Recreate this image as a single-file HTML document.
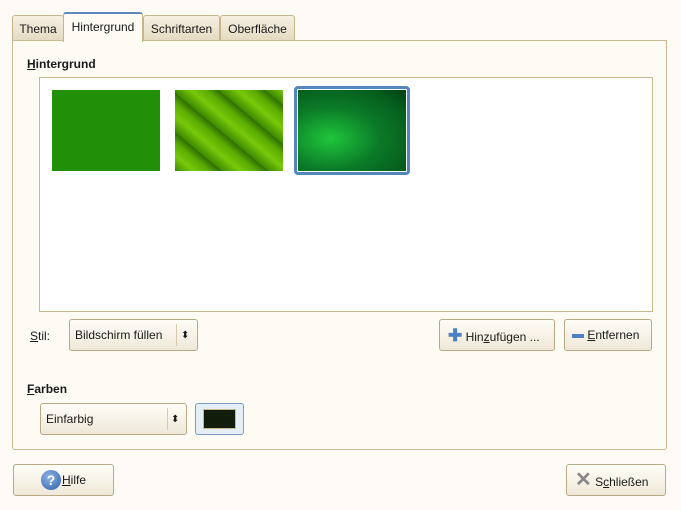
<!DOCTYPE html><html><head><style>
body{margin:0;width:681px;height:510px;background:#fefbf6;font-family:"Liberation Sans",sans-serif;font-size:12px;color:#1a1a1a;position:relative;overflow:hidden}
.a{position:absolute;box-sizing:border-box}
.tab{border:1px solid #c6b589;border-bottom:none;border-radius:3px 3px 0 0;background:linear-gradient(#f6f0e2,#e5dbc2);top:15px;height:25px;line-height:27px;text-align:center}
.btn{border:1px solid #b9a984;border-radius:3px;background:linear-gradient(#fffdf8,#efe8d8);line-height:31px}
u{text-decoration:underline}
</style></head><body>
<div class="a" style="left:12px;top:40px;width:655px;height:410px;border:1px solid #c9b98f;border-radius:0 0 3px 3px;background:#fefbf5"></div>
<div class="a tab" style="left:12px;width:52px">Thema</div>
<div class="a tab" style="left:143px;width:77px">Schriftarten</div>
<div class="a tab" style="left:220px;width:75px">Oberfläche</div>
<div class="a" style="left:63px;top:12px;width:80px;height:30px;border:1px solid #c6b589;border-top:2px solid #5a88bb;border-bottom:none;border-radius:3px 3px 0 0;background:#fefbf5;text-align:center;line-height:26px">Hintergrund</div>
<div class="a" style="left:27px;top:57px;font-weight:bold"><u>H</u>intergrund</div>
<div class="a" style="left:39px;top:77px;width:614px;height:235px;border:1px solid #c9b98f;background:#fff"></div>
<div class="a" style="left:52px;top:90px;width:108px;height:81px;background:#218f08"></div>
<div class="a" style="left:175px;top:90px;width:108px;height:81px;background:repeating-linear-gradient(40deg,#3d8a00 0,#78c80a 12px,#5aac00 22px,#2f6d00 30px)"></div>
<div class="a" style="left:294px;top:86px;width:116px;height:89px;border:3px solid #5286bd;border-radius:4px;background:#fff;padding:1px"><div style="width:108px;height:81px;background:radial-gradient(ellipse at 30% 60%,#1fc63c,#0b7b28 45%,#055c1c 80%,#033e12)"></div></div>
<div class="a" style="left:30px;top:329px"><u>S</u>til:</div>
<div class="a btn" style="left:69px;top:319px;width:129px;height:32px;padding-left:5px">Bildschirm füllen<span style="position:absolute;left:106px;top:4px;height:22px;border-left:1px solid #d8cbaa"></span><span style="position:absolute;left:111px;top:0;font-size:10px">⬍</span></div>
<div class="a btn" style="left:439px;top:319px;width:116px;height:32px;padding-left:8px"><span style="color:#4d80c0;font-weight:bold;font-size:17px">✚</span> Hin<u>z</u>ufügen ...</div>
<div class="a btn" style="left:564px;top:319px;width:88px;height:32px;padding-left:7px"><span style="display:inline-block;width:12px;height:4px;background:#4d80c0;vertical-align:middle"></span> <u>E</u>ntfernen</div>
<div class="a" style="left:27px;top:382px;font-weight:bold"><u>F</u>arben</div>
<div class="a btn" style="left:40px;top:403px;width:147px;height:32px;padding-left:5px">Einfarbig<span style="position:absolute;left:126px;top:4px;height:22px;border-left:1px solid #d8cbaa"></span><span style="position:absolute;left:130px;top:0;font-size:10px">⬍</span></div>
<div class="a" style="left:195px;top:403px;width:49px;height:32px;border:1px solid #7a9cc0;border-radius:3px;background:#e6eef5;padding:5px 7px"><div style="width:100%;height:100%;border:1px solid #c8b88a;background:#111c0b;box-sizing:border-box"></div></div>
<div class="a btn" style="left:13px;top:464px;width:101px;height:32px;padding-left:26px"><span style="position:absolute;left:27px;top:5px;width:20px;height:20px;border-radius:50%;background:radial-gradient(circle at 40% 35%,#8fb5e6,#2b5fa8);color:#fff;font-weight:bold;text-align:center;line-height:20px;font-size:14px">?</span><span style="margin-left:22px"><u>H</u>ilfe</span></div>
<div class="a btn" style="left:566px;top:464px;width:100px;height:32px;padding-left:8px"><span style="color:#888;font-size:20px;font-weight:bold">✕</span> S<u>c</u>hließen</div>
</body></html>
